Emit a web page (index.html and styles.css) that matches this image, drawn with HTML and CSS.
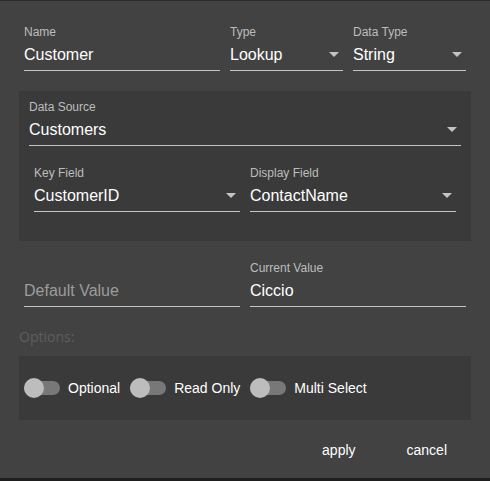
FILE: index.html
```html
<!DOCTYPE html>
<html>
<head>
<meta charset="utf-8">
<link rel="stylesheet" href="styles.css">
</head>
<body>
<div class="dialog">
  <div class="row row-top">
    <div class="field f-name">
      <div class="label">Name</div>
      <div class="value">Customer</div>
    </div>
    <div class="field f-type">
      <div class="label">Type</div>
      <div class="value"><span>Lookup</span><i class="arrow"></i></div>
    </div>
    <div class="field f-dtype">
      <div class="label">Data Type</div>
      <div class="value"><span>String</span><i class="arrow"></i></div>
    </div>
  </div>

  <div class="panel source">
    <div class="field">
      <div class="label">Data Source</div>
      <div class="value"><span>Customers</span><i class="arrow"></i></div>
    </div>
    <div class="row row-keys">
      <div class="field half">
        <div class="label">Key Field</div>
        <div class="value"><span>CustomerID</span><i class="arrow"></i></div>
      </div>
      <div class="field half">
        <div class="label">Display Field</div>
        <div class="value"><span>ContactName</span><i class="arrow"></i></div>
      </div>
    </div>
  </div>

  <div class="row row-values">
    <div class="field half">
      <div class="label"></div>
      <div class="value placeholder">Default Value</div>
    </div>
    <div class="field half">
      <div class="label">Current Value</div>
      <div class="value">Ciccio</div>
    </div>
  </div>

  <div class="options-title">Options:</div>
  <div class="panel options">
    <div class="toggle"><span class="switch"><span class="track"></span><span class="thumb"></span></span><span class="tlabel">Optional</span></div>
    <div class="toggle"><span class="switch"><span class="track"></span><span class="thumb"></span></span><span class="tlabel">Read Only</span></div>
    <div class="toggle"><span class="switch"><span class="track"></span><span class="thumb"></span></span><span class="tlabel">Multi Select</span></div>
  </div>

  <div class="actions">
    <button class="btn">apply</button>
    <button class="btn">cancel</button>
  </div>
</div>
</body>
</html>
```

FILE: styles.css
```css
* { box-sizing: border-box; }
html, body { margin: 0; padding: 0; }
body {
  background: #1e1e1e;
  font-family: "Liberation Sans", Arial, sans-serif;
  width: 490px;
  height: 481px;
  overflow: hidden;
}
.dialog {
  width: 490px;
  height: 478px;
  background: #424242;
  border-top: 1px solid #2c2c2c;
  padding: 24px 19px 0 19px;
}
.row {
  display: flex;
  gap: 10px;
  padding: 0 5px;
}
.field {
  display: flex;
  flex-direction: column;
  border-bottom: 1px solid #c4c4c4;
  padding-bottom: 4px;
}
.f-name { width: 196px; }
.f-type { width: 113px; }
.f-dtype { width: 113px; }
.half { flex: 1 1 0; }
.label {
  height: 14px;
  line-height: 14px;
  font-size: 12px;
  color: #bdbdbd;
  margin-bottom: 5px;
}
.value {
  height: 22px;
  line-height: 22px;
  font-size: 16px;
  color: #ffffff;
  display: flex;
  align-items: center;
  justify-content: space-between;
  padding-right: 4px;
  white-space: nowrap;
}
.value.placeholder { color: #9c9c9c; }
.arrow {
  width: 0;
  height: 0;
  border-left: 5px solid transparent;
  border-right: 5px solid transparent;
  border-top: 5px solid #c4c4c4;
  margin-top: -2px;
}
.panel {
  background: #3a3a3a;
}
.source {
  margin-top: 20px;
  padding: 9px 10px 29px 10px;
}
.row-keys { margin-top: 20px; }
.row-values { margin-top: 20px; }
.options-title {
  margin-top: 20px;
  height: 20px;
  line-height: 20px;
  font-family: "Open Sans", sans-serif;
  font-size: 14px;
  color: #5e5e5e;
}
.options {
  margin-top: 9px;
  height: 64px;
  padding: 0 5px;
  display: flex;
  align-items: center;
  gap: 10px;
}
.toggle {
  display: flex;
  align-items: center;
  gap: 8px;
}
.switch {
  position: relative;
  width: 36px;
  height: 20px;
  display: block;
}
.track {
  position: absolute;
  left: 0;
  top: 3px;
  width: 36px;
  height: 14px;
  border-radius: 7px;
  background: #787878;
}
.thumb {
  position: absolute;
  left: 0;
  top: 0;
  width: 20px;
  height: 20px;
  border-radius: 50%;
  background: #bdbdbd;
}
.tlabel {
  font-size: 14px;
  color: #ffffff;
  white-space: nowrap;
}
.actions {
  margin-top: 12px;
  display: flex;
  justify-content: flex-end;
  gap: 51px;
  padding-right: 24px;
}
.btn {
  background: transparent;
  border: none;
  height: 36px;
  padding: 0;
  font-family: "Liberation Sans", Arial, sans-serif;
  font-size: 14px;
  color: #ffffff;
}
```
